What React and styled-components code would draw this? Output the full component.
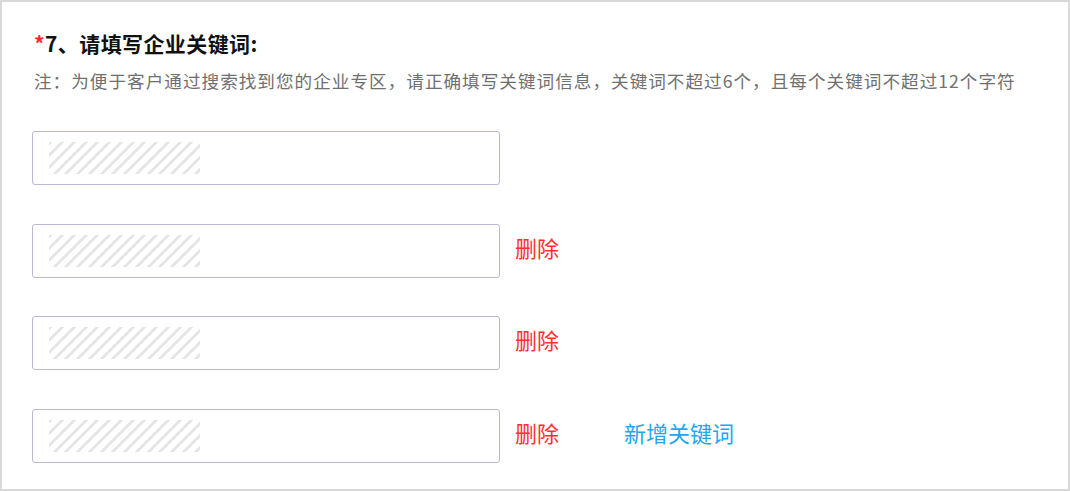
import React from "react";
import styled, { createGlobalStyle } from "styled-components";

const Global = createGlobalStyle`
  html, body { margin: 0; padding: 0; background: #fff; }
  body { font-family: "Noto Sans CJK SC", "Noto Sans", sans-serif; }
  * { box-sizing: border-box; }
`;

const Frame = styled.div`
  width: 1070px;
  height: 491px;
  border: 2px solid #d9d9d9;
  padding: 26px 30px 0 30px;
  background: #fff;
`;

const Title = styled.h2`
  margin: 0 0 0 2px;
  font-size: 21px;
  line-height: 30px;
  font-weight: 700;
  color: #111;
  letter-spacing: 0.4px;
`;

const Star = styled.span`
  color: #ff2a2a;
  font-weight: 700;
`;

const Note = styled.p`
  margin: 10px 0 0 2px;
  font-size: 17.6px;
  line-height: 26px;
  color: #707070;
  letter-spacing: 1.02px;
  white-space: nowrap;
`;

const List = styled.div`
  margin-top: 37px;
  display: flex;
  flex-direction: column;
  gap: 38.5px;
`;

const Row = styled.div`
  display: flex;
  align-items: center;
  height: 54px;
`;

const Field = styled.div`
  width: 468px;
  height: 54px;
  border: 1px solid #b9b9d6;
  border-radius: 3px;
  display: flex;
  align-items: center;
  padding-left: 16px;
  background: #fff;
`;

const Hatch = styled.div`
  width: 151px;
  height: 32px;
  background: repeating-linear-gradient(
    135deg,
    #e6e6e6 0px,
    #e6e6e6 2.8px,
    #ffffff 2.8px,
    #ffffff 8.3px
  );
`;

const Action = styled.span`
  font-size: 22px;
  line-height: 30px;
  color: ${(p) => p.$color};
  margin-left: ${(p) => p.$gap}px;
  margin-top: -8px;
  cursor: pointer;
  white-space: nowrap;
`;

const rows = [
  { del: false, add: false },
  { del: true, add: false },
  { del: true, add: false },
  { del: true, add: true },
];

export default function App() {
  return (
    <>
      <Global />
      <Frame>
        <Title>
          <Star>*</Star>7、请填写企业关键词:
        </Title>
        <Note>
          注：为便于客户通过搜索找到您的企业专区，请正确填写关键词信息，关键词不超过6个，且每个关键词不超过12个字符
        </Note>
        <List>
          {rows.map((r, i) => (
            <Row key={i}>
              <Field>
                <Hatch />
              </Field>
              {r.del && (
                <Action $color="#ff2f2f" $gap={15}>
                  删除
                </Action>
              )}
              {r.add && (
                <Action $color="#1ea6f5" $gap={65}>
                  新增关键词
                </Action>
              )}
            </Row>
          ))}
        </List>
      </Frame>
    </>
  );
}
